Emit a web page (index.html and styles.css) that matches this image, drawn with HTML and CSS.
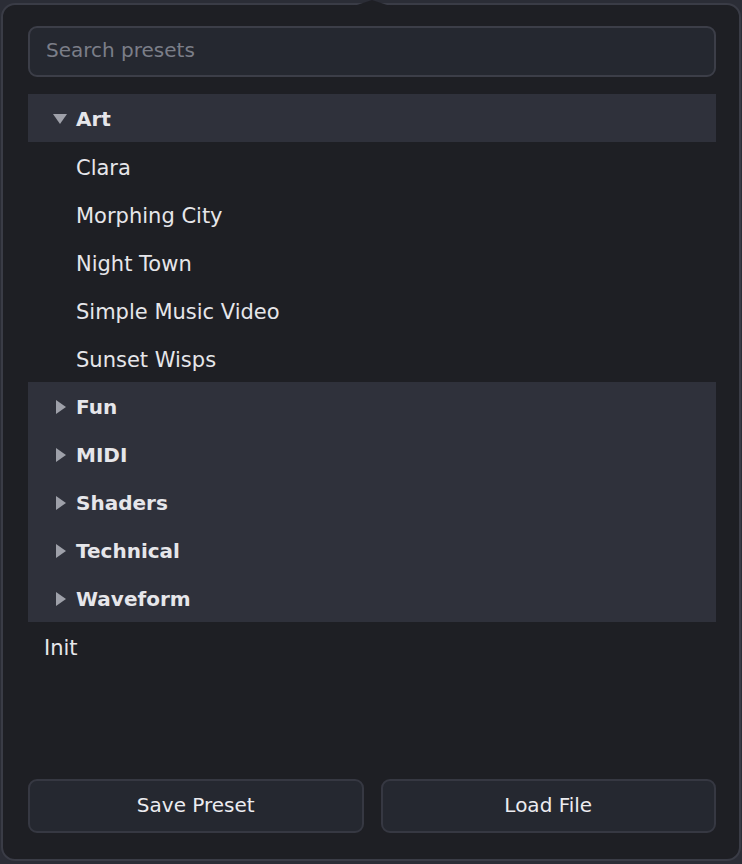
FILE: index.html
```html
<!DOCTYPE html>
<html lang="en">
<head>
    <meta charset="UTF-8">
    <meta name="viewport" content="width=device-width, initial-scale=1.0">
    <title>Presets</title>
    <link rel="stylesheet" href="styles.css">
</head>
<body>
    <div class="preset-panel">
        <input class="search-box" type="text" placeholder="Search presets">

        <div class="preset-tree">
            <div class="folder-row open"><span class="arrow down"></span>Art</div>
            <div class="preset-row child">Clara</div>
            <div class="preset-row child">Morphing City</div>
            <div class="preset-row child">Night Town</div>
            <div class="preset-row child">Simple Music Video</div>
            <div class="preset-row child">Sunset Wisps</div>
            <div class="folder-row"><span class="arrow right"></span>Fun</div>
            <div class="folder-row"><span class="arrow right"></span>MIDI</div>
            <div class="folder-row"><span class="arrow right"></span>Shaders</div>
            <div class="folder-row"><span class="arrow right"></span>Technical</div>
            <div class="folder-row"><span class="arrow right"></span>Waveform</div>
            <div class="preset-row">Init</div>
        </div>

        <div class="button-row">
            <button class="panel-button">Save Preset</button>
            <button class="panel-button">Load File</button>
        </div>
    </div>
</body>
</html>
```

FILE: styles.css
```css
body {
    margin: 0;
    padding: 3px 1px;
    height: 100vh;
    box-sizing: border-box;
    background-color: #2b2d36;
    font-family: "DejaVu Sans", "Liberation Sans", sans-serif;
    color: #e6e6ea;
    overflow: hidden;
}

.preset-panel {
    position: relative;
    display: flex;
    flex-direction: column;
    height: 100%;
    box-sizing: border-box;
    padding: 21px 23px 26px 25px;
    background-color: #1e1f24;
    border: 2px solid #3a3c46;
    border-radius: 14px;
}

/* little pointer at the top of the popover */
.preset-panel::before {
    content: "";
    position: absolute;
    top: -5px;
    left: 348px;
    width: 0;
    height: 0;
    border-left: 21px solid transparent;
    border-right: 21px solid transparent;
    border-bottom: 7px solid #1e1f24;
}

.search-box {
    height: 51px;
    box-sizing: border-box;
    padding: 0 16px 3px;
    background-color: #252830;
    border: 2px solid #3c3e48;
    border-radius: 9px;
    color: #e6e6ea;
    font-family: "DejaVu Sans", "Liberation Sans", sans-serif;
    font-size: 20px;
    outline: none;
}

.search-box::placeholder {
    color: #7b7e88;
}

.preset-tree {
    flex: 1;
    margin-top: 17px;
}

.folder-row, .preset-row {
    display: flex;
    align-items: center;
    height: 48px;
    box-sizing: border-box;
    padding-left: 16px;
}

.folder-row {
    background-color: #2f313b;
    font-size: 20px;
    font-weight: bold;
    padding-left: 25px;
    padding-top: 1px;
}

.preset-row {
    font-size: 21px;
    padding-top: 3px;
}

.preset-row.child {
    padding-left: 48px;
}

.arrow {
    display: inline-block;
    width: 0;
    height: 0;
}

.arrow.down {
    border-left: 7px solid transparent;
    border-right: 7px solid transparent;
    border-top: 10px solid #9ea0a9;
    margin-top: 0;
    margin-right: 9px;
}

.arrow.right {
    border-top: 7px solid transparent;
    border-bottom: 7px solid transparent;
    border-left: 10px solid #9ea0a9;
    margin-left: 3px;
    margin-right: 10px;
}

.button-row {
    display: flex;
    gap: 17px;
}

.panel-button {
    flex: 1;
    height: 54px;
    padding-bottom: 3px;
    background-color: #252830;
    border: 2px solid #363842;
    border-radius: 9px;
    color: #ececf0;
    font-family: "DejaVu Sans", "Liberation Sans", sans-serif;
    font-size: 20px;
    cursor: pointer;
}

.panel-button:hover {
    background-color: #2f313b;
}
```
